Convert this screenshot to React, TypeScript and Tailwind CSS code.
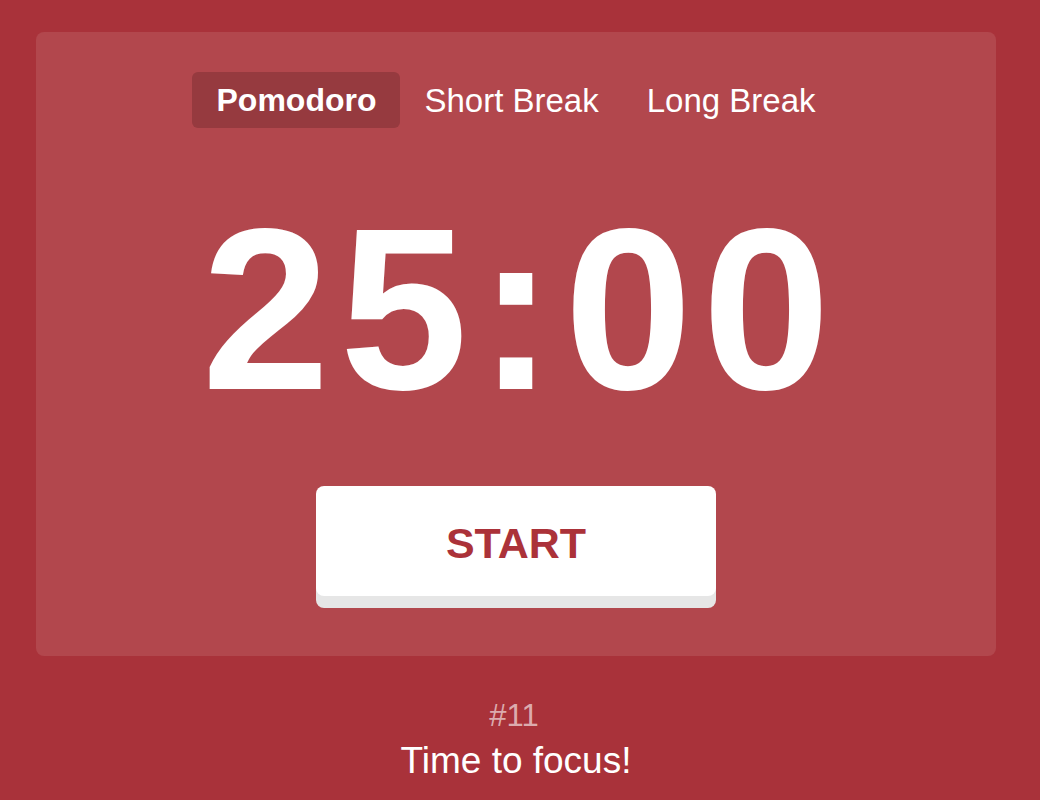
import { useState } from 'react';

const tabs = ['Pomodoro', 'Short Break', 'Long Break'];

export default function App() {
  const [active, setActive] = useState(0);

  return (
    <div className="min-h-screen w-full bg-[#a9323a] pt-8 font-['Liberation_Sans',Arial,sans-serif] text-white">
      {/* Timer card */}
      <div className="ml-9 flex w-[960px] flex-col items-center rounded-lg bg-[#b2474d] pt-10 pb-12">
        <div className="flex items-center">
          {tabs.map((t, i) => (
            <button
              key={t}
              onClick={() => setActive(i)}
              className={
                'h-14 cursor-pointer rounded-md px-6 leading-none ' +
                (active === i ? 'bg-[#963a3f] text-[32px] font-bold' : 'text-[33px] font-normal')
              }
            >
              {t}
            </button>
          ))}
        </div>

        <div className="mt-[67px] pl-[10px] text-[230px] font-bold leading-none tracking-[10px]">25:00</div>

        <button className="mt-[61px] mb-3 h-[110px] w-[400px] cursor-pointer rounded-lg bg-white pt-1 text-[43px] font-bold text-[#ab3239] shadow-[0_12px_0_#e6e6e6]">
          START
        </button>
      </div>

      {/* Session info */}
      <div className="ml-9 mt-[42px] flex w-[960px] flex-col items-center">
        <div className="pr-1 text-[31px] leading-[36px] text-white/60">#11</div>
        <div className="mt-[6px] text-[37px] leading-[42px]">Time to focus!</div>
      </div>
    </div>
  );
}
